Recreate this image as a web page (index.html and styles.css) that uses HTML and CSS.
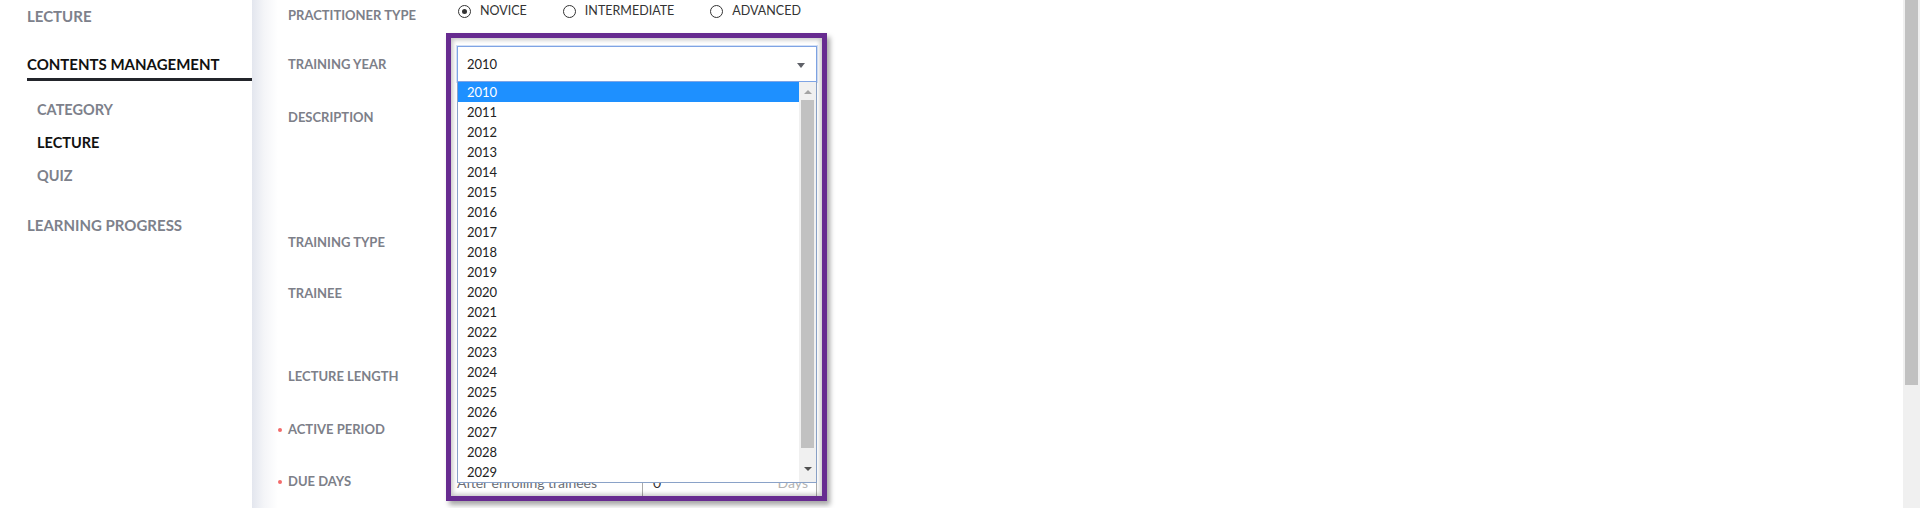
FILE: index.html
```html
<!DOCTYPE html>
<html lang="en">
<head>
    <meta charset="utf-8">
    <link rel="stylesheet" href="styles.css">
</head>
<body>
<div class="page">
    <div class="sidebar">
        <a class="menu" href="#">LECTURE</a>
        <div class="menu-group">
            <a class="menu active" href="#">CONTENTS MANAGEMENT</a>
            <ul class="submenu">
                <li><a href="#">CATEGORY</a></li>
                <li class="current"><a href="#">LECTURE</a></li>
                <li><a href="#">QUIZ</a></li>
            </ul>
        </div>
        <a class="menu" href="#">LEARNING PROGRESS</a>
    </div>
    <div class="main">
        <form class="form">
            <div class="row row-type">
                <label class="label">PRACTITIONER TYPE</label>
                <div class="control radios">
                    <span class="radio checked"><i></i>NOVICE</span>
                    <span class="radio"><i></i>INTERMEDIATE</span>
                    <span class="radio"><i></i>ADVANCED</span>
                </div>
            </div>
            <div class="row row-year">
                <label class="label">TRAINING YEAR</label>
                <div class="control select-wrap">
                    <div class="select">2010<span class="caret"></span></div>
                    <div class="dropdown">
                        <ul class="options">
                            <li class="selected">2010</li>
                            <li>2011</li>
                            <li>2012</li>
                            <li>2013</li>
                            <li>2014</li>
                            <li>2015</li>
                            <li>2016</li>
                            <li>2017</li>
                            <li>2018</li>
                            <li>2019</li>
                            <li>2020</li>
                            <li>2021</li>
                            <li>2022</li>
                            <li>2023</li>
                            <li>2024</li>
                            <li>2025</li>
                            <li>2026</li>
                            <li>2027</li>
                            <li>2028</li>
                            <li>2029</li>
                            <li>2030</li>
                        </ul>
                        <div class="list-scroll">
                            <span class="up"></span>
                            <span class="thumb"></span>
                            <span class="down"></span>
                        </div>
                    </div>
                    <div class="highlight"></div>
                </div>
            </div>
            <div class="row row-desc">
                <label class="label">DESCRIPTION</label>
                <div class="control"><textarea class="textarea"></textarea></div>
            </div>
            <div class="row row-ttype">
                <label class="label">TRAINING TYPE</label>
                <div class="control"><div class="field"></div></div>
            </div>
            <div class="row row-trainee">
                <label class="label">TRAINEE</label>
                <div class="control"><div class="field"></div></div>
            </div>
            <div class="row row-length">
                <label class="label">LECTURE LENGTH</label>
                <div class="control"><div class="field"></div></div>
            </div>
            <div class="row row-period">
                <label class="label required">ACTIVE PERIOD</label>
                <div class="control"><div class="field"></div></div>
            </div>
            <div class="row row-due">
                <label class="label required">DUE DAYS</label>
                <div class="control due">
                    <span class="due-text">After enrolling trainees</span>
                    <div class="days-input"><span>0</span><span class="unit">Days</span></div>
                </div>
            </div>
        </form>
    </div>
    <div class="page-scroll"><span class="page-thumb"></span></div>
</div>
</body>
</html>
```

FILE: styles.css
```css
* {
    margin: 0;
    padding: 0;
    box-sizing: border-box;
}
ul {
    list-style: none;
}
a {
    text-decoration: none;
    color: inherit;
}
body {
    height: 508px;
    overflow: hidden;
    background: #fff;
    font-family: Lato, "Noto Sans", sans-serif;
}
.page {
    display: flex;
    height: 508px;
}

/* sidebar */
.sidebar {
    width: 252px;
    flex-shrink: 0;
    padding: 6px 0 0 27px;
}
.menu {
    display: block;
    font-size: 15px;
    line-height: 20px;
    font-weight: bold;
    color: #7d818b;
}
.menu-group {
    margin-top: 28px;
}
.menu.active {
    color: #111;
    padding-bottom: 4px;
    border-bottom: 3px solid #23252b;
}
.submenu {
    margin: 12px 0 23px;
    padding-left: 10px;
}
.submenu li {
    height: 33px;
    line-height: 33px;
    font-size: 14.5px;
    font-weight: bold;
    color: #7d818b;
}
.submenu li.current {
    color: #111;
}

/* main */
.main {
    flex: 1;
    padding-left: 36px;
    background: linear-gradient(to right, #e3e6ee 0, #f4f5f8 12px, #fff 26px);
}
.row {
    display: flex;
    margin-bottom: 15px;
}
.label {
    width: 169px;
    flex-shrink: 0;
    padding-top: 9px;
    font-size: 13px;
    line-height: 18px;
    font-weight: bold;
    color: #7d8089;
}
.label.required::before {
    content: "";
    display: inline-block;
    width: 4px;
    height: 4px;
    border-radius: 50%;
    background-color: #f36b6b;
    margin: 0 6px 2px -10px;
    vertical-align: middle;
}
.control {
    width: 360px;
}
.row-type {
    height: 31px;
}
.row-type .label {
    padding-top: 6px;
}
.row-year { height: 38px; }
.row-desc { height: 110px; }
.row-ttype { height: 36px; }
.row-trainee { height: 68px; }
.row-length { height: 38px; }
.row-period { height: 37px; }

.radios {
    display: flex;
    align-items: flex-start;
    gap: 36px;
    padding-top: 3px;
    width: auto;
    margin-left: 1px;
}
.radio {
    display: flex;
    align-items: center;
    font-size: 12.5px;
    line-height: 16px;
    color: #333;
}
.radio i {
    width: 13px;
    height: 13px;
    border: 1.5px solid #333;
    border-radius: 50%;
    margin-right: 9px;
    display: flex;
    align-items: center;
    justify-content: center;
}
.radio.checked i::after {
    content: "";
    width: 5px;
    height: 5px;
    border-radius: 50%;
    background-color: #333;
}

.textarea {
    width: 100%;
    height: 110px;
    border: 1px solid #c9ccd2;
    resize: none;
}
.field {
    height: 34px;
    border: 1px solid #c9ccd2;
}

/* training year select */
.select-wrap {
    position: relative;
    height: 36px;
}
.select {
    height: 36px;
    border: 1px solid #7fa4e4;
    box-shadow: 0 0 0 1px #d3e0f6;
    padding-left: 9px;
    font-size: 13px;
    line-height: 35px;
    color: #222;
    position: relative;
}
.caret {
    position: absolute;
    right: 11px;
    top: 16px;
    border-left: 4px solid transparent;
    border-right: 4px solid transparent;
    border-top: 5px solid #5f6168;
}
.dropdown {
    position: absolute;
    top: 36px;
    left: 0;
    width: 360px;
    height: 401px;
    background: #fff;
    border: 1px solid #8aa2c8;
    border-top: none;
    display: flex;
    overflow: hidden;
    z-index: 2;
}
.options {
    flex: 1;
}
.options li {
    height: 20px;
    line-height: 21px;
    padding-left: 9px;
    font-size: 13px;
    color: #222;
}
.options li.selected {
    background-color: #1e90ff;
    color: #fff;
}
.list-scroll {
    width: 17px;
    flex-shrink: 0;
    background-color: #f0f0f0;
    display: flex;
    flex-direction: column;
    align-items: center;
}
.list-scroll .up {
    margin-top: 8px;
    border-left: 4px solid transparent;
    border-right: 4px solid transparent;
    border-bottom: 4px solid #a3a3a3;
}
.list-scroll .thumb {
    margin-top: 6px;
    width: 13px;
    height: 348px;
    background-color: #c1c1c1;
}
.list-scroll .down {
    margin-top: 19px;
    border-left: 4px solid transparent;
    border-right: 4px solid transparent;
    border-top: 4px solid #505050;
}
.highlight {
    position: absolute;
    left: -11px;
    top: -13px;
    width: 381px;
    height: 468px;
    border: 5px solid #672b90;
    box-shadow: inset 0 0 4px 2px rgba(0, 0, 0, .22), 3px 4px 5px rgba(0, 0, 0, .35);
    pointer-events: none;
    z-index: 3;
}

/* due days */
.due {
    display: flex;
    align-items: center;
    padding-top: 4px;
}
.due-text {
    font-size: 14px;
    color: #6b6e75;
}
.days-input {
    margin-left: auto;
    width: 175px;
    height: 31px;
    border: 1px solid #aaa;
    display: flex;
    justify-content: space-between;
    align-items: center;
    padding: 0 8px 0 10px;
    font-size: 14px;
    color: #333;
}
.days-input .unit {
    color: #b3b3b3;
}

/* page scrollbar */
.page-scroll {
    width: 17px;
    flex-shrink: 0;
    background-color: #f0f0f0;
    padding: 0 2px;
}
.page-thumb {
    display: block;
    height: 385px;
    background-color: #c1c1c1;
}
```
